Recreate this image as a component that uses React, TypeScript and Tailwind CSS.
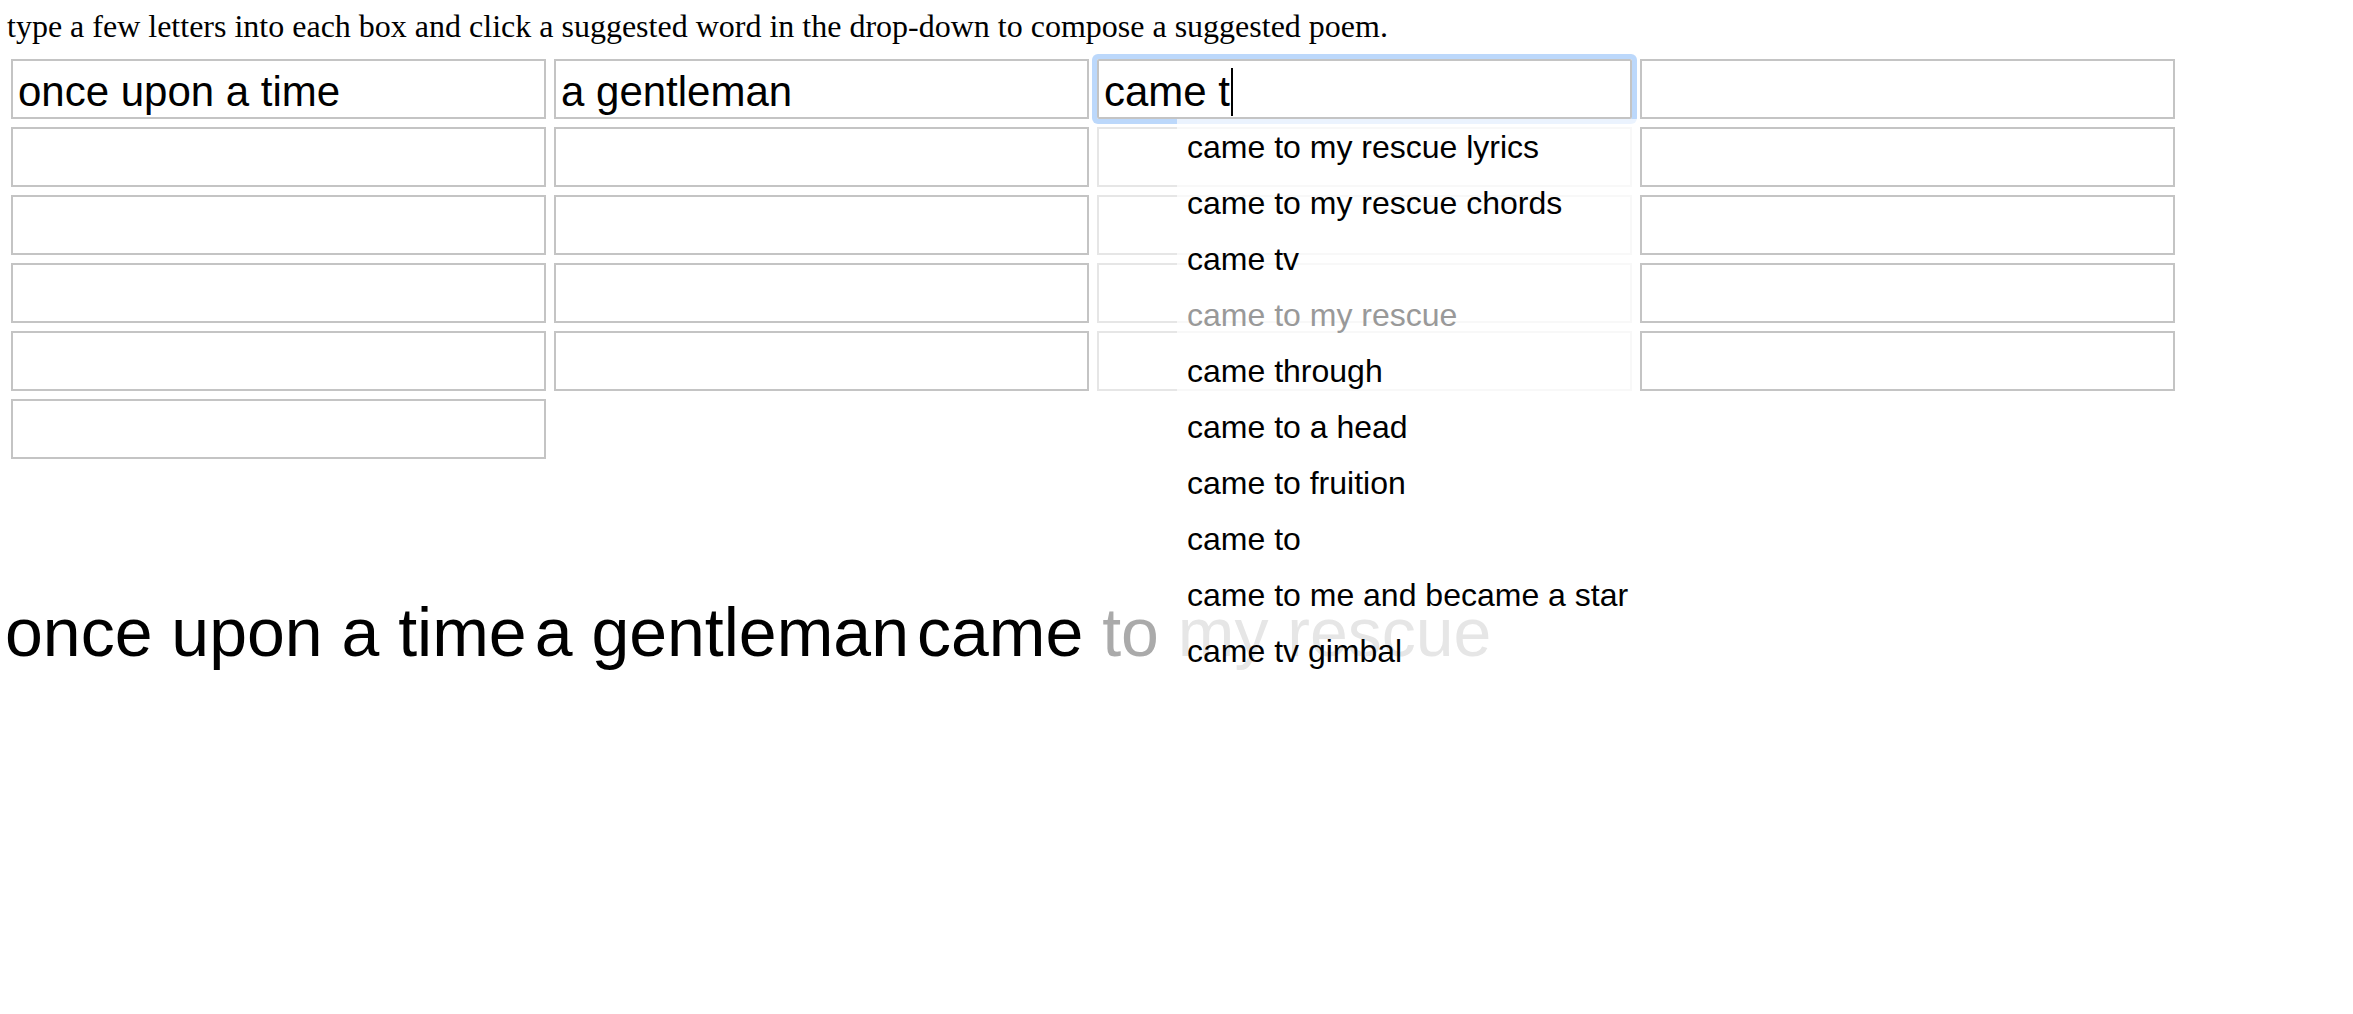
const filled: Record<number, string> = {
  0: "once upon a time",
  1: "a gentleman",
};

// column-3 boxes that sit under the open suggestion list look washed out
const faint = new Set([6, 10, 14, 18]);

const suggestions = [
  "came to my rescue lyrics",
  "came to my rescue chords",
  "came tv",
  "came to my rescue",
  "came through",
  "came to a head",
  "came to fruition",
  "came to",
  "came to me and became a star",
  "came tv gimbal",
];

const sans = "font-['Liberation_Sans',Arial,sans-serif]";

export default function App() {
  return (
    <div className="relative min-h-screen bg-white pl-[5px] pt-[8px] font-['Liberation_Serif','Times_New_Roman',serif] text-[32px] text-black">
      <div className="pl-[2px] leading-[37px]">
        type a few letters into each box and click a suggested word in the drop-down to compose a suggested poem.
      </div>

      {/* word boxes */}
      <div className="mt-[14px] grid grid-cols-[repeat(4,535px)] gap-x-[8px] gap-y-[8px] pl-[6px]">
        {Array.from({ length: 21 }).map((_, i) =>
          i === 2 ? (
            <div
              key={i}
              className={`flex h-[60px] items-center rounded-[2px] border-2 border-[#c4c4c4] pl-[5px] pt-[6px] text-[42px] leading-[48px] shadow-[0_0_0_5px_#bcd8fb] ${sans}`}
            >
              <span>came t</span>
              <span className="ml-[1px] inline-block h-[48px] w-[2px] bg-black" />
            </div>
          ) : (
            <input
              key={i}
              readOnly
              value={filled[i] ?? ""}
              className={`h-[60px] border-2 pl-[5px] pt-[6px] text-[42px] leading-[48px] text-black outline-none ${sans} ${
                faint.has(i) ? "border-[#e6e6e6]" : "border-[#c4c4c4]"
              }`}
            />
          ),
        )}
      </div>

      {/* composed poem */}
      <div className="mt-[122px] whitespace-nowrap">
        <span className={`text-[68px] ${sans}`}>once upon a time</span>{" "}
        <span className={`text-[68px] ${sans}`}>a gentleman</span>{" "}
        <span className={`text-[68px] ${sans}`}>
          came<span className="text-[#aaaaaa]"> to my rescue</span>
        </span>
      </div>

      {/* suggestion drop-down */}
      <ul className={`absolute left-[1177px] top-[119px] w-[463px] bg-white/70 ${sans} text-[32px]`}>
        {suggestions.map((s, i) => (
          <li
            key={s}
            className={`h-[56px] whitespace-nowrap pl-[10px] leading-[56px] ${i === 3 ? "text-[#999999]" : "text-black"}`}
          >
            {s}
          </li>
        ))}
      </ul>
    </div>
  );
}
